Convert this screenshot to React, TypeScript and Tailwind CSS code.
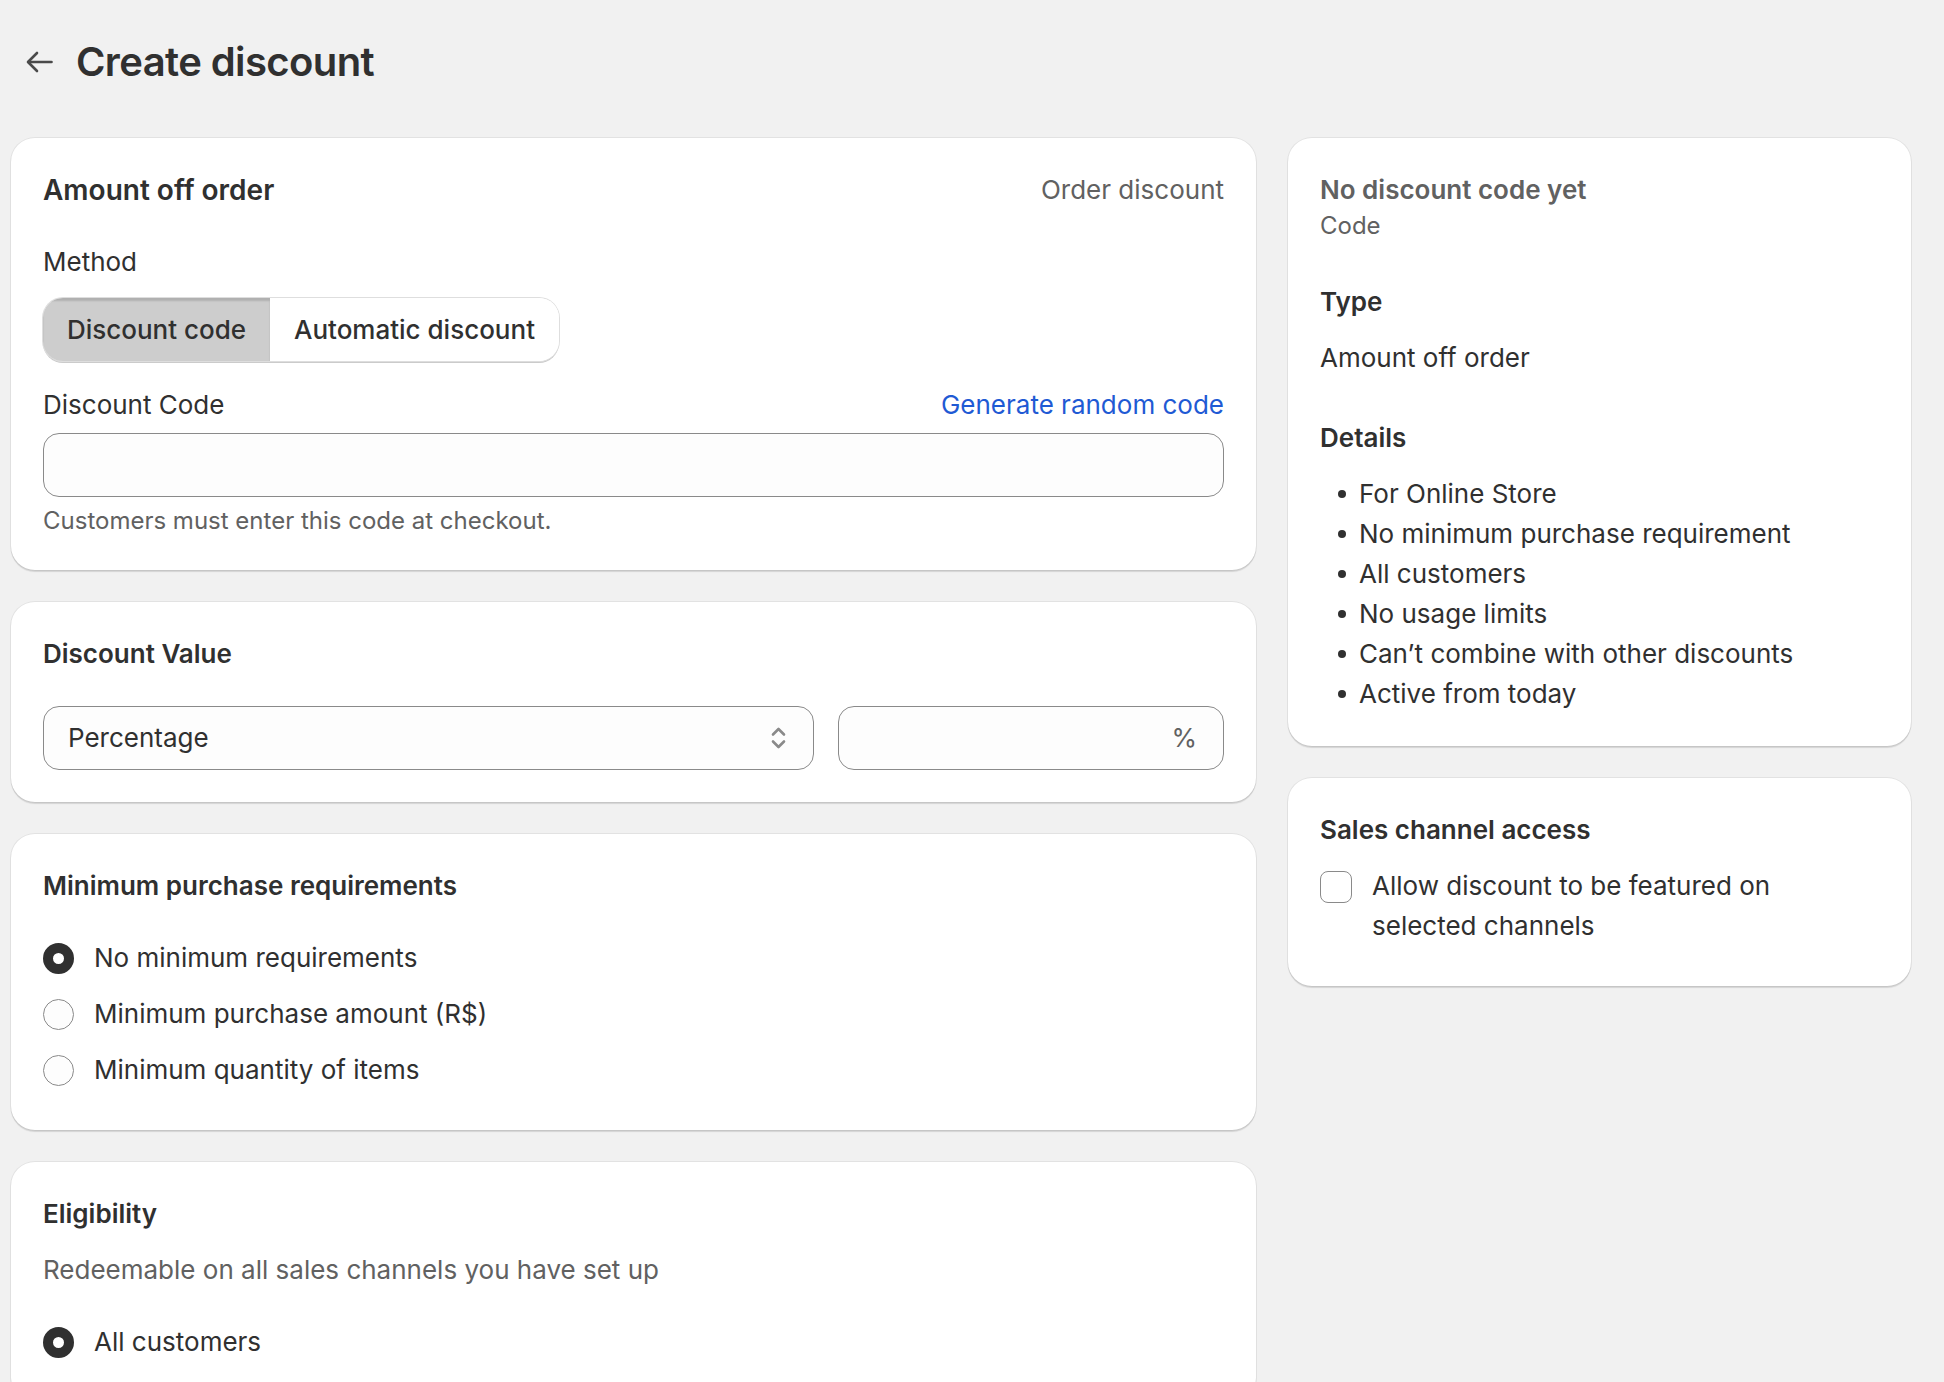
import { useState } from 'react';

type Option = { id: string; label: string };

const minimumOptions: Option[] = [
  { id: 'none', label: 'No minimum requirements' },
  { id: 'amount', label: 'Minimum purchase amount (R$)' },
  { id: 'quantity', label: 'Minimum quantity of items' },
];

const eligibilityOptions: Option[] = [{ id: 'all', label: 'All customers' }];

const details = [
  'For Online Store',
  'No minimum purchase requirement',
  'All customers',
  'No usage limits',
  'Can’t combine with other discounts',
  'Active from today',
];

function Card({ className = '', children }: { className?: string; children: React.ReactNode }) {
  return (
    <section
      className={`bg-white rounded-[24px] px-8 pt-8 shadow-[0_0_0_1px_rgba(0,0,0,0.06),0_2px_1px_rgba(0,0,0,0.12)] ${className}`}
    >
      {children}
    </section>
  );
}

function Radio({ checked, label, onChange }: { checked: boolean; label: string; onChange: () => void }) {
  return (
    <label className="flex items-center gap-5 cursor-pointer">
      <span
        onClick={onChange}
        className={
          checked
            ? 'w-[31px] h-[31px] rounded-full border-[10px] border-[#303030] bg-white shrink-0'
            : 'w-[31px] h-[31px] rounded-full border border-[#8a8a8a] bg-[#fdfdfd] shrink-0'
        }
      />
      <span>{label}</span>
    </label>
  );
}

export default function App() {
  const [method, setMethod] = useState<'code' | 'automatic'>('code');
  const [minimum, setMinimum] = useState('none');
  const [eligibility, setEligibility] = useState('all');
  const [featured, setFeatured] = useState(false);

  return (
    <div className="min-h-screen bg-[#f1f1f1] font-['Inter','Noto_Sans',sans-serif] text-[26px] leading-[40px] text-[#303030]">
      <div className="pl-[11px] pr-[33px] pt-[38px] pb-16">
        {/* Page header */}
        <header className="flex items-center pl-[15px] gap-[23px] h-12">
          <button className="text-[#4a4a4a]" title="Back">
            <svg width="27" height="22" viewBox="0 0 27 22" fill="none" stroke="currentColor" strokeWidth="2.6" strokeLinecap="round" strokeLinejoin="round">
              <path d="M25.5 11H2.5" />
              <path d="M11 2L2 11l9 9" />
            </svg>
          </button>
          <h1 className="text-[40px] leading-[48px] font-semibold tracking-[-0.6px] text-[#303030]">Create discount</h1>
        </header>

        <div className="grid grid-cols-[1245px_623px] gap-8 mt-[52px] items-start">
          {/* Main column */}
          <div className="flex flex-col gap-8">
            <Card className="pb-[33px]">
              <div className="flex justify-between">
                <h2 className="text-[28px] font-semibold">Amount off order</h2>
                <span className="text-[#616161]">Order discount</span>
              </div>

              <div className="mt-8">Method</div>
              <div className="mt-4 inline-flex h-[63px] rounded-[20px] overflow-hidden shadow-[0_0_0_1px_#dedede,0_2px_0_#cbcbcb]">
                <button
                  onClick={() => setMethod('code')}
                  className={`w-[227px] font-medium ${method === 'code' ? 'bg-[#cdcdcd] shadow-[inset_0_3px_2px_rgba(0,0,0,0.14)]' : 'bg-white'}`}
                >
                  Discount code
                </button>
                <button
                  onClick={() => setMethod('automatic')}
                  className={`w-[289px] font-medium ${method === 'automatic' ? 'bg-[#cdcdcd] shadow-[inset_0_3px_2px_rgba(0,0,0,0.14)]' : 'bg-white'}`}
                >
                  Automatic discount
                </button>
              </div>

              <div className="mt-6 flex justify-between">
                <label htmlFor="code">Discount Code</label>
                <a href="#" className="text-[#1f5ad4]">Generate random code</a>
              </div>
              <input
                id="code"
                className="mt-2 block w-full h-16 rounded-[16px] border border-[#8a8a8a] bg-[#fdfdfd] px-6 outline-none"
              />
              <p className="mt-2 text-[24px] leading-[32px] text-[#616161]">Customers must enter this code at checkout.</p>
            </Card>

            <Card className="pb-8">
              <h2 className="font-semibold">Discount Value</h2>
              <div className="mt-8 grid grid-cols-[2fr_1fr] gap-6">
                <div className="h-16 rounded-[16px] border border-[#8a8a8a] bg-[#fdfdfd] pl-6 pr-[27px] flex items-center justify-between">
                  <span>Percentage</span>
                  <svg width="15" height="26" viewBox="0 0 15 26" fill="none" stroke="#8a8a8a" strokeWidth="2.6" strokeLinecap="round" strokeLinejoin="round">
                    <path d="M2 9.5L7.5 4l5.5 5.5" />
                    <path d="M2 16.5L7.5 22l5.5-5.5" />
                  </svg>
                </div>
                <div className="h-16 rounded-[16px] border border-[#8a8a8a] bg-[#fdfdfd] px-[26px] flex items-center justify-end">
                  <span className="text-[#616161]">%</span>
                </div>
              </div>
            </Card>

            <Card className="pb-10">
              <h2 className="font-semibold">Minimum purchase requirements</h2>
              <div className="mt-8 flex flex-col gap-4">
                {minimumOptions.map((o) => (
                  <Radio key={o.id} label={o.label} checked={minimum === o.id} onChange={() => setMinimum(o.id)} />
                ))}
              </div>
            </Card>

            <Card className="pb-10">
              <h2 className="font-semibold">Eligibility</h2>
              <p className="mt-4 text-[#616161]">Redeemable on all sales channels you have set up</p>
              <div className="mt-8 flex flex-col gap-4">
                {eligibilityOptions.map((o) => (
                  <Radio key={o.id} label={o.label} checked={eligibility === o.id} onChange={() => setEligibility(o.id)} />
                ))}
              </div>
            </Card>
          </div>

          {/* Summary column */}
          <div className="flex flex-col gap-8">
            <Card className="pb-8">
              <h3 className="font-semibold text-[#616161]">No discount code yet</h3>
              <div className="text-[24px] leading-[32px] text-[#616161]">Code</div>

              <h3 className="mt-10 font-semibold">Type</h3>
              <p className="mt-4">Amount off order</p>

              <h3 className="mt-10 font-semibold">Details</h3>
              <ul className="mt-4">
                {details.map((d) => (
                  <li key={d} className="flex items-center pl-[18px] gap-[13px]">
                    <span className="w-[8px] h-[8px] rounded-full bg-[#303030] shrink-0" />
                    {d}
                  </li>
                ))}
              </ul>
            </Card>

            <Card className="pb-10">
              <h3 className="font-semibold">Sales channel access</h3>
              <label className="mt-4 flex items-start gap-5 cursor-pointer">
                <span
                  onClick={() => setFeatured(!featured)}
                  className={`mt-[5px] w-8 h-8 rounded-[8px] border shrink-0 ${featured ? 'bg-[#303030] border-[#303030]' : 'bg-white border-[#8a8a8a]'}`}
                />
                <span className="max-w-[430px]">Allow discount to be featured on selected channels</span>
              </label>
            </Card>
          </div>
        </div>
      </div>
    </div>
  );
}
